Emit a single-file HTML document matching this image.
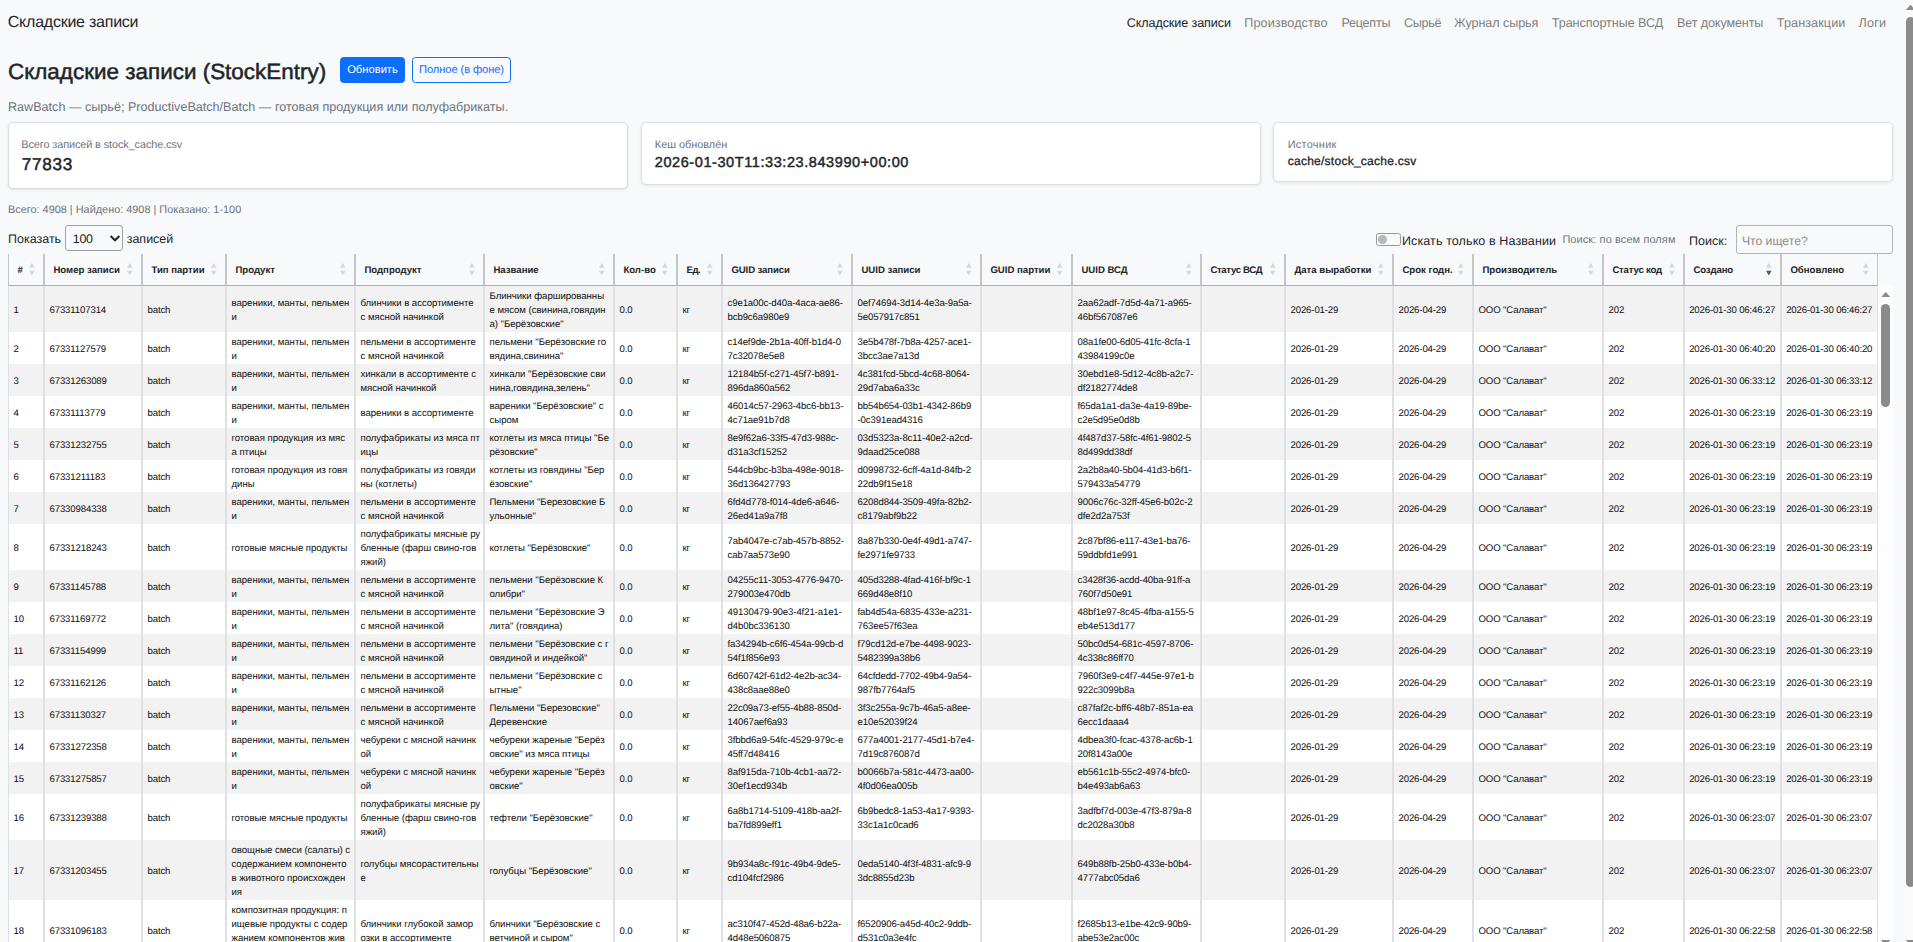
<!DOCTYPE html>
<html lang="ru"><head><meta charset="utf-8"><title>Складские записи</title>
<style>
*{box-sizing:border-box}
html,body{margin:0;padding:0}
body{width:1913px;height:942px;overflow:hidden;position:relative;background:#f8f9fa;color:#212529;font-family:"Liberation Sans",sans-serif;font-size:14px;text-rendering:geometricPrecision}
.a{position:absolute;white-space:nowrap;line-height:1;margin:0;font-weight:normal;text-decoration:none}
h1.a{font-weight:normal}
button{font-family:inherit;padding:0;margin:0;text-rendering:inherit}
.b{font-weight:bold}
.sb{-webkit-text-stroke:0.45px #212529}
.mut{color:#6c757d}
.nav{color:#7e7f80}
.nav.act{color:#212529}
.btn{position:absolute;top:57px;height:26px;border-radius:3.5px;border:1px solid #0d6efd;font-size:11.2px;line-height:25.6px;text-align:center;white-space:nowrap}
.btn.p{left:340px;width:65px;background:#0d6efd;color:#fff}
.btn.o{left:412px;width:99px;color:#0d6efd;background:transparent;letter-spacing:-0.12px}
.card{position:absolute;top:122px;background:#fff;border:1px solid #dcdee1;border-radius:5px;box-shadow:0 1px 3px rgba(0,0,0,.09)}
.sel{position:absolute;left:65px;top:225px;width:58px;height:26px;border:1px solid #a0a0a0;border-radius:3px}
.inp{position:absolute;left:1736px;top:225px;width:157px;height:28.5px;border:1px solid #b4b4b4;border-radius:3px}
.sw{position:absolute;left:1376px;top:233px;width:25px;height:12.7px;border:1px solid #999;border-radius:2.5px}
.sw i{position:absolute;left:1px;top:1px;width:8.8px;height:8.8px;border-radius:50%;background:#b8b8b8}
/* table */
.tw{position:absolute;left:8px;top:254px;width:1885px;height:688px;overflow:hidden}
table.dt{border-collapse:separate;border-spacing:0;table-layout:fixed;width:1870px;font-size:9.6px;line-height:14px}
.dt th{height:32px;background:#f8f9fa;border-left:1px solid #c3c5c8;border-right:1px solid #c3c5c8;border-bottom:1px solid #a9acb0;padding:3px 0 0 8.4px;text-align:left;font-weight:bold;font-size:9.6px;position:relative;white-space:nowrap;vertical-align:middle}
.dt td{padding:4px 4px 0 4.5px;color:#0d0e10;letter-spacing:-0.13px;border-left:1px solid #dee0e3;border-right:1px solid #dee0e3;vertical-align:middle;white-space:nowrap;overflow:hidden}
.dt th:first-child,.dt td:first-child{border-left-width:1px}
.dt td.t{padding-left:4.2px;letter-spacing:-0.16px}
.dt td.c{letter-spacing:-0.03px}
.dt td.g{letter-spacing:-0.11px}
.dt tbody tr:nth-child(odd) td{background:#f2f2f2}
.dt tbody tr:nth-child(even) td{background:#fff}
.so{position:absolute;right:8px;top:9.2px;width:5.6px;height:12.4px}
.so path{fill:#d6d7d9}
.desc .so .d{fill:#55585c}
/* scrollbars */
.isb{position:absolute;left:1878px;top:286px;width:15px;height:656px;background:#fdfdfd}
.isb .th{position:absolute;left:3.2px;top:17.8px;width:8.9px;height:103.4px;border-radius:4.5px;background:#8b8b8b}
.arr{position:absolute;width:9.6px;height:5.2px;background:#8b8b8b}
.arr.up{clip-path:polygon(50% 0,100% 100%,0 100%)}
.arr.dn{clip-path:polygon(0 0,100% 0,50% 100%)}
.psb{position:absolute;left:1903px;top:0;width:17px;height:942px;background:#fafafa}
.psb .th{position:absolute;left:3.1px;top:17px;width:9px;height:869.5px;border-radius:4.5px;background:#8b8b8b}

</style></head>
<body>
<nav>
<a class="a" id="brand" style="left:7.8px;top:14.8px;font-size:16px;letter-spacing:-0.24px">Складские записи</a>
<a class="a nav act" style="left:1126.7px;top:17.2px;font-size:12.6px;letter-spacing:-0.1px">Складские записи</a>
<a class="a nav" style="left:1244.3px;top:17.2px;font-size:12.6px;letter-spacing:0.1px">Производство</a>
<a class="a nav" style="left:1341.4px;top:17.2px;font-size:12.6px;letter-spacing:-0.24px">Рецепты</a>
<a class="a nav" style="left:1403.9px;top:17.2px;font-size:12.6px;letter-spacing:-0.28px">Сырьё</a>
<a class="a nav" style="left:1454.1px;top:17.2px;font-size:12.6px;letter-spacing:-0.08px">Журнал сырья</a>
<a class="a nav" style="left:1551.8px;top:17.2px;font-size:12.6px;letter-spacing:-0.06px">Транспортные ВСД</a>
<a class="a nav" style="left:1676.9px;top:17.2px;font-size:12.6px;letter-spacing:-0.11px">Вет документы</a>
<a class="a nav" style="left:1776.8px;top:17.2px;font-size:12.6px;letter-spacing:0.12px">Транзакции</a>
<a class="a nav" style="left:1858.6px;top:17.2px;font-size:12.6px;letter-spacing:0.2px">Логи</a>
</nav>
<h1 class="a" id="h1" style="left:8px;top:61px;font-size:22px;-webkit-text-stroke:0.5px #212529;transform-origin:0 0;transform:scaleX(1.02)">Складские записи (StockEntry)</h1>
<button type="button" class="btn p">Обновить</button>
<button type="button" class="btn o">Полное (в фоне)</button>
<span class="a mut" id="sub" style="left:8px;top:100.5px;font-size:12.6px">RawBatch — сырьё; ProductiveBatch/Batch — готовая продукция или полуфабрикаты.</span>
<div class="card" style="left:8px;width:619.5px;height:66.8px"><span class="a mut" style="left:12.3px;top:16.9px;font-size:10.9px;letter-spacing:-0.1px">Всего записей в stock_cache.csv</span><span class="a sb" style="left:12.8px;top:33.1px;font-size:17.2px;letter-spacing:0.68px">77833</span></div>
<div class="card" style="left:640.5px;width:620px;height:62.6px"><span class="a mut" style="left:13.3px;top:16.9px;font-size:10.9px">Кеш обновлён</span><span class="a sb" style="left:13.3px;top:33.1px;font-size:14.5px;letter-spacing:0.58px">2026-01-30T11:33:23.843990+00:00</span></div>
<div class="card" style="left:1273px;width:619.5px;height:59.5px"><span class="a mut" style="left:13.7px;top:16.9px;font-size:10.9px;letter-spacing:0.3px">Источник</span><span class="a sb" style="left:13.7px;top:31.5px;font-size:12px;letter-spacing:0.26px;-webkit-text-stroke-width:0.28px">cache/stock_cache.csv</span></div>
<span class="a mut" style="left:8px;top:205.2px;font-size:10.9px">Всего: 4908 | Найдено: 4908 | Показано: 1-100</span>
<span class="a" style="left:8px;top:233px;font-size:12.5px">Показать</span>
<div class="sel"><span class="a" style="left:6.8px;top:7px;font-size:12.5px;letter-spacing:-0.3px">100</span><svg style="position:absolute;left:42.5px;top:8px" width="12" height="9" viewBox="0 0 12 9"><path d="M1.6 2 L6 6.3 L10.4 2" fill="none" stroke="#212529" stroke-width="2" stroke-linecap="butt" stroke-linejoin="miter"/></svg></div>
<span class="a" style="left:126.7px;top:233px;font-size:12.5px">записей</span>
<div class="sw"><i></i></div>
<span class="a" style="left:1402px;top:235px;font-size:12.5px;letter-spacing:0.11px">Искать только в Названии</span>
<span class="a mut" style="left:1562.4px;top:234.8px;font-size:10.9px;letter-spacing:0.14px">Поиск: по всем полям</span>
<span class="a" style="left:1689px;top:235px;font-size:12.5px">Поиск:</span>
<div class="inp"><span class="a" style="left:4.9px;top:8.5px;font-size:12.2px;color:#8c8c8c">Что ищете?</span></div>
<div class="tw">
<table class="dt">
<colgroup><col style="width:36px"><col style="width:98px"><col style="width:84px"><col style="width:129px"><col style="width:129px"><col style="width:130px"><col style="width:63px"><col style="width:45px"><col style="width:130px"><col style="width:129px"><col style="width:91px"><col style="width:129px"><col style="width:84px"><col style="width:108px"><col style="width:80px"><col style="width:130px"><col style="width:81px"><col style="width:97px"><col style="width:97px"></colgroup>
<thead><tr><th><span class="hl">#</span><svg class="so" viewBox="0 0 5.6 12.4"><path class="u" d="M0 4.7L2.8 0L5.6 4.7Z"/><path class="d" d="M0 7.7L5.6 7.7L2.8 12.4Z"/></svg></th><th><span class="hl">Номер записи</span><svg class="so" viewBox="0 0 5.6 12.4"><path class="u" d="M0 4.7L2.8 0L5.6 4.7Z"/><path class="d" d="M0 7.7L5.6 7.7L2.8 12.4Z"/></svg></th><th><span class="hl">Тип партии</span><svg class="so" viewBox="0 0 5.6 12.4"><path class="u" d="M0 4.7L2.8 0L5.6 4.7Z"/><path class="d" d="M0 7.7L5.6 7.7L2.8 12.4Z"/></svg></th><th><span class="hl">Продукт</span><svg class="so" viewBox="0 0 5.6 12.4"><path class="u" d="M0 4.7L2.8 0L5.6 4.7Z"/><path class="d" d="M0 7.7L5.6 7.7L2.8 12.4Z"/></svg></th><th><span class="hl">Подпродукт</span><svg class="so" viewBox="0 0 5.6 12.4"><path class="u" d="M0 4.7L2.8 0L5.6 4.7Z"/><path class="d" d="M0 7.7L5.6 7.7L2.8 12.4Z"/></svg></th><th><span class="hl">Название</span><svg class="so" viewBox="0 0 5.6 12.4"><path class="u" d="M0 4.7L2.8 0L5.6 4.7Z"/><path class="d" d="M0 7.7L5.6 7.7L2.8 12.4Z"/></svg></th><th><span class="hl">Кол-во</span><svg class="so" viewBox="0 0 5.6 12.4"><path class="u" d="M0 4.7L2.8 0L5.6 4.7Z"/><path class="d" d="M0 7.7L5.6 7.7L2.8 12.4Z"/></svg></th><th><span class="hl" style="letter-spacing:-0.4px">Ед.</span><svg class="so" viewBox="0 0 5.6 12.4"><path class="u" d="M0 4.7L2.8 0L5.6 4.7Z"/><path class="d" d="M0 7.7L5.6 7.7L2.8 12.4Z"/></svg></th><th><span class="hl" style="letter-spacing:-0.1px">GUID записи</span><svg class="so" viewBox="0 0 5.6 12.4"><path class="u" d="M0 4.7L2.8 0L5.6 4.7Z"/><path class="d" d="M0 7.7L5.6 7.7L2.8 12.4Z"/></svg></th><th><span class="hl">UUID записи</span><svg class="so" viewBox="0 0 5.6 12.4"><path class="u" d="M0 4.7L2.8 0L5.6 4.7Z"/><path class="d" d="M0 7.7L5.6 7.7L2.8 12.4Z"/></svg></th><th><span class="hl">GUID партии</span><svg class="so" viewBox="0 0 5.6 12.4"><path class="u" d="M0 4.7L2.8 0L5.6 4.7Z"/><path class="d" d="M0 7.7L5.6 7.7L2.8 12.4Z"/></svg></th><th><span class="hl">UUID ВСД</span><svg class="so" viewBox="0 0 5.6 12.4"><path class="u" d="M0 4.7L2.8 0L5.6 4.7Z"/><path class="d" d="M0 7.7L5.6 7.7L2.8 12.4Z"/></svg></th><th><span class="hl" style="letter-spacing:-0.33px">Статус ВСД</span><svg class="so" viewBox="0 0 5.6 12.4"><path class="u" d="M0 4.7L2.8 0L5.6 4.7Z"/><path class="d" d="M0 7.7L5.6 7.7L2.8 12.4Z"/></svg></th><th><span class="hl">Дата выработки</span><svg class="so" viewBox="0 0 5.6 12.4"><path class="u" d="M0 4.7L2.8 0L5.6 4.7Z"/><path class="d" d="M0 7.7L5.6 7.7L2.8 12.4Z"/></svg></th><th><span class="hl">Срок годн.</span><svg class="so" viewBox="0 0 5.6 12.4"><path class="u" d="M0 4.7L2.8 0L5.6 4.7Z"/><path class="d" d="M0 7.7L5.6 7.7L2.8 12.4Z"/></svg></th><th><span class="hl">Производитель</span><svg class="so" viewBox="0 0 5.6 12.4"><path class="u" d="M0 4.7L2.8 0L5.6 4.7Z"/><path class="d" d="M0 7.7L5.6 7.7L2.8 12.4Z"/></svg></th><th><span class="hl" style="letter-spacing:-0.2px">Статус код</span><svg class="so" viewBox="0 0 5.6 12.4"><path class="u" d="M0 4.7L2.8 0L5.6 4.7Z"/><path class="d" d="M0 7.7L5.6 7.7L2.8 12.4Z"/></svg></th><th class="desc"><span class="hl" style="letter-spacing:-0.12px">Создано</span><svg class="so" viewBox="0 0 5.6 12.4"><path class="u" d="M0 4.7L2.8 0L5.6 4.7Z"/><path class="d" d="M0 7.7L5.6 7.7L2.8 12.4Z"/></svg></th><th><span class="hl">Обновлено</span><svg class="so" viewBox="0 0 5.6 12.4"><path class="u" d="M0 4.7L2.8 0L5.6 4.7Z"/><path class="d" d="M0 7.7L5.6 7.7L2.8 12.4Z"/></svg></th></tr></thead>
<tbody>
<tr><td>1</td><td>67331107314</td><td>batch</td><td class="c">вареники, манты, пельмен<br>и</td><td class="c">блинчики в ассортименте<br>с мясной начинкой</td><td class="c">Блинчики фаршированны<br>е мясом (свинина,говядин<br>а) &quot;Берёзовские&quot;</td><td>0.0</td><td>кг</td><td class="g">c9e1a00c-d40a-4aca-ae86-<br>bcb9c6a980e9</td><td class="g">0ef74694-3d14-4e3a-9a5a-<br>5e057917c851</td><td></td><td class="g">2aa62adf-7d5d-4a71-a965-<br>46bf567087e6</td><td></td><td>2026-01-29</td><td>2026-04-29</td><td>ООО &quot;Салават&quot;</td><td>202</td><td class="t">2026-01-30 06:46:27</td><td class="t">2026-01-30 06:46:27</td></tr>
<tr><td>2</td><td>67331127579</td><td>batch</td><td class="c">вареники, манты, пельмен<br>и</td><td class="c">пельмени в ассортименте<br>с мясной начинкой</td><td class="c">пельмени &quot;Берёзовские го<br>вядина,свинина&quot;</td><td>0.0</td><td>кг</td><td class="g">c14ef9de-2b1a-40ff-b1d4-0<br>7c32078e5e8</td><td class="g">3e5b478f-7b8a-4257-ace1-<br>3bcc3ae7a13d</td><td></td><td class="g">08a1fe00-6d05-41fc-8cfa-1<br>43984199c0e</td><td></td><td>2026-01-29</td><td>2026-04-29</td><td>ООО &quot;Салават&quot;</td><td>202</td><td class="t">2026-01-30 06:40:20</td><td class="t">2026-01-30 06:40:20</td></tr>
<tr><td>3</td><td>67331263089</td><td>batch</td><td class="c">вареники, манты, пельмен<br>и</td><td class="c">хинкали в ассортименте с<br>мясной начинкой</td><td class="c">хинкали &quot;Берёзовские сви<br>нина,говядина,зелень&quot;</td><td>0.0</td><td>кг</td><td class="g">12184b5f-c271-45f7-b891-<br>896da860a562</td><td class="g">4c381fcd-5bcd-4c68-8064-<br>29d7aba6a33c</td><td></td><td class="g">30ebd1e8-5d12-4c8b-a2c7-<br>df2182774de8</td><td></td><td>2026-01-29</td><td>2026-04-29</td><td>ООО &quot;Салават&quot;</td><td>202</td><td class="t">2026-01-30 06:33:12</td><td class="t">2026-01-30 06:33:12</td></tr>
<tr><td>4</td><td>67331113779</td><td>batch</td><td class="c">вареники, манты, пельмен<br>и</td><td class="c">вареники в ассортименте</td><td class="c">вареники &quot;Берёзовские&quot; с<br>сыром</td><td>0.0</td><td>кг</td><td class="g">46014c57-2963-4bc6-bb13-<br>4c71ae91b7d8</td><td class="g">bb54b654-03b1-4342-86b9<br>-0c391ead4316</td><td></td><td class="g">f65da1a1-da3e-4a19-89be-<br>c2e5d95e0d8b</td><td></td><td>2026-01-29</td><td>2026-04-29</td><td>ООО &quot;Салават&quot;</td><td>202</td><td class="t">2026-01-30 06:23:19</td><td class="t">2026-01-30 06:23:19</td></tr>
<tr><td>5</td><td>67331232755</td><td>batch</td><td class="c">готовая продукция из мяс<br>а птицы</td><td class="c">полуфабрикаты из мяса пт<br>ицы</td><td class="c">котлеты из мяса птицы &quot;Бе<br>рёзовские&quot;</td><td>0.0</td><td>кг</td><td class="g">8e9f62a6-33f5-47d3-988c-<br>d31a3cf15252</td><td class="g">03d5323a-8c11-40e2-a2cd-<br>9daad25ce088</td><td></td><td class="g">4f487d37-58fc-4f61-9802-5<br>8d499dd38df</td><td></td><td>2026-01-29</td><td>2026-04-29</td><td>ООО &quot;Салават&quot;</td><td>202</td><td class="t">2026-01-30 06:23:19</td><td class="t">2026-01-30 06:23:19</td></tr>
<tr><td>6</td><td>67331211183</td><td>batch</td><td class="c">готовая продукция из говя<br>дины</td><td class="c">полуфабрикаты из говяди<br>ны (котлеты)</td><td class="c">котлеты из говядины &quot;Бер<br>ёзовские&quot;</td><td>0.0</td><td>кг</td><td class="g">544cb9bc-b3ba-498e-9018-<br>36d136427793</td><td class="g">d0998732-6cff-4a1d-84fb-2<br>22db9f15e18</td><td></td><td class="g">2a2b8a40-5b04-41d3-b6f1-<br>579433a54779</td><td></td><td>2026-01-29</td><td>2026-04-29</td><td>ООО &quot;Салават&quot;</td><td>202</td><td class="t">2026-01-30 06:23:19</td><td class="t">2026-01-30 06:23:19</td></tr>
<tr><td>7</td><td>67330984338</td><td>batch</td><td class="c">вареники, манты, пельмен<br>и</td><td class="c">пельмени в ассортименте<br>с мясной начинкой</td><td class="c">Пельмени &quot;Березовские Б<br>ульонные&quot;</td><td>0.0</td><td>кг</td><td class="g">6fd4d778-f014-4de6-a646-<br>26ed41a9a7f8</td><td class="g">6208d844-3509-49fa-82b2-<br>c8179abf9b22</td><td></td><td class="g">9006c76c-32ff-45e6-b02c-2<br>dfe2d2a753f</td><td></td><td>2026-01-29</td><td>2026-04-29</td><td>ООО &quot;Салават&quot;</td><td>202</td><td class="t">2026-01-30 06:23:19</td><td class="t">2026-01-30 06:23:19</td></tr>
<tr><td>8</td><td>67331218243</td><td>batch</td><td class="c">готовые мясные продукты</td><td class="c">полуфабрикаты мясные ру<br>бленные (фарш свино-гов<br>яжий)</td><td class="c">котлеты &quot;Берёзовские&quot;</td><td>0.0</td><td>кг</td><td class="g">7ab4047e-c7ab-457b-8852-<br>cab7aa573e90</td><td class="g">8a87b330-0e4f-49d1-a747-<br>fe2971fe9733</td><td></td><td class="g">2c87bf86-e117-43e1-ba76-<br>59ddbfd1e991</td><td></td><td>2026-01-29</td><td>2026-04-29</td><td>ООО &quot;Салават&quot;</td><td>202</td><td class="t">2026-01-30 06:23:19</td><td class="t">2026-01-30 06:23:19</td></tr>
<tr><td>9</td><td>67331145788</td><td>batch</td><td class="c">вареники, манты, пельмен<br>и</td><td class="c">пельмени в ассортименте<br>с мясной начинкой</td><td class="c">пельмени &quot;Берёзовские К<br>олибри&quot;</td><td>0.0</td><td>кг</td><td class="g">04255c11-3053-4776-9470-<br>279003e470db</td><td class="g">405d3288-4fad-416f-bf9c-1<br>669d48e8f10</td><td></td><td class="g">c3428f36-acdd-40ba-91ff-a<br>760f7d50e91</td><td></td><td>2026-01-29</td><td>2026-04-29</td><td>ООО &quot;Салават&quot;</td><td>202</td><td class="t">2026-01-30 06:23:19</td><td class="t">2026-01-30 06:23:19</td></tr>
<tr><td>10</td><td>67331169772</td><td>batch</td><td class="c">вареники, манты, пельмен<br>и</td><td class="c">пельмени в ассортименте<br>с мясной начинкой</td><td class="c">пельмени &quot;Берёзовские Э<br>лита&quot; (говядина)</td><td>0.0</td><td>кг</td><td class="g">49130479-90e3-4f21-a1e1-<br>d4b0bc336130</td><td class="g">fab4d54a-6835-433e-a231-<br>763ee57f63ea</td><td></td><td class="g">48bf1e97-8c45-4fba-a155-5<br>eb4e513d177</td><td></td><td>2026-01-29</td><td>2026-04-29</td><td>ООО &quot;Салават&quot;</td><td>202</td><td class="t">2026-01-30 06:23:19</td><td class="t">2026-01-30 06:23:19</td></tr>
<tr><td>11</td><td>67331154999</td><td>batch</td><td class="c">вареники, манты, пельмен<br>и</td><td class="c">пельмени в ассортименте<br>с мясной начинкой</td><td class="c">пельмени &quot;Берёзовские с г<br>овядиной и индейкой&quot;</td><td>0.0</td><td>кг</td><td class="g">fa34294b-c6f6-454a-99cb-d<br>54f1f856e93</td><td class="g">f79cd12d-e7be-4498-9023-<br>5482399a38b6</td><td></td><td class="g">50bc0d54-681c-4597-8706-<br>4c338c86ff70</td><td></td><td>2026-01-29</td><td>2026-04-29</td><td>ООО &quot;Салават&quot;</td><td>202</td><td class="t">2026-01-30 06:23:19</td><td class="t">2026-01-30 06:23:19</td></tr>
<tr><td>12</td><td>67331162126</td><td>batch</td><td class="c">вареники, манты, пельмен<br>и</td><td class="c">пельмени в ассортименте<br>с мясной начинкой</td><td class="c">пельмени &quot;Берёзовские с<br>ытные&quot;</td><td>0.0</td><td>кг</td><td class="g">6d60742f-61d2-4e2b-ac34-<br>438c8aae88e0</td><td class="g">64cfdedd-7702-49b4-9a54-<br>987fb7764af5</td><td></td><td class="g">7960f3e9-c4f7-445e-97e1-b<br>922c3099b8a</td><td></td><td>2026-01-29</td><td>2026-04-29</td><td>ООО &quot;Салават&quot;</td><td>202</td><td class="t">2026-01-30 06:23:19</td><td class="t">2026-01-30 06:23:19</td></tr>
<tr><td>13</td><td>67331130327</td><td>batch</td><td class="c">вареники, манты, пельмен<br>и</td><td class="c">пельмени в ассортименте<br>с мясной начинкой</td><td class="c">Пельмени &quot;Березовские&quot;<br>Деревенские</td><td>0.0</td><td>кг</td><td class="g">22c09a73-ef55-4b88-850d-<br>14067aef6a93</td><td class="g">3f3c255a-9c7b-46a5-a8ee-<br>e10e52039f24</td><td></td><td class="g">c87faf2c-bff6-48b7-851a-ea<br>6ecc1daaa4</td><td></td><td>2026-01-29</td><td>2026-04-29</td><td>ООО &quot;Салават&quot;</td><td>202</td><td class="t">2026-01-30 06:23:19</td><td class="t">2026-01-30 06:23:19</td></tr>
<tr><td>14</td><td>67331272358</td><td>batch</td><td class="c">вареники, манты, пельмен<br>и</td><td class="c">чебуреки с мясной начинк<br>ой</td><td class="c">чебуреки жареные &quot;Берёз<br>овские&quot; из мяса птицы</td><td>0.0</td><td>кг</td><td class="g">3fbbd6a9-54fc-4529-979c-e<br>45ff7d48416</td><td class="g">677a4001-2177-45d1-b7e4-<br>7d19c876087d</td><td></td><td class="g">4dbea3f0-fcac-4378-ac6b-1<br>20f8143a00e</td><td></td><td>2026-01-29</td><td>2026-04-29</td><td>ООО &quot;Салават&quot;</td><td>202</td><td class="t">2026-01-30 06:23:19</td><td class="t">2026-01-30 06:23:19</td></tr>
<tr><td>15</td><td>67331275857</td><td>batch</td><td class="c">вареники, манты, пельмен<br>и</td><td class="c">чебуреки с мясной начинк<br>ой</td><td class="c">чебуреки жареные &quot;Берёз<br>овские&quot;</td><td>0.0</td><td>кг</td><td class="g">8af915da-710b-4cb1-aa72-<br>30ef1ecd934b</td><td class="g">b0066b7a-581c-4473-aa00-<br>4f0d06ea005b</td><td></td><td class="g">eb561c1b-55c2-4974-bfc0-<br>b4e493ab6a63</td><td></td><td>2026-01-29</td><td>2026-04-29</td><td>ООО &quot;Салават&quot;</td><td>202</td><td class="t">2026-01-30 06:23:19</td><td class="t">2026-01-30 06:23:19</td></tr>
<tr><td>16</td><td>67331239388</td><td>batch</td><td class="c">готовые мясные продукты</td><td class="c">полуфабрикаты мясные ру<br>бленные (фарш свино-гов<br>яжий)</td><td class="c">тефтели &quot;Берёзовские&quot;</td><td>0.0</td><td>кг</td><td class="g">6a8b1714-5109-418b-aa2f-<br>ba7fd899eff1</td><td class="g">6b9bedc8-1a53-4a17-9393-<br>33c1a1c0cad6</td><td></td><td class="g">3adfbf7d-003e-47f3-879a-8<br>dc2028a30b8</td><td></td><td>2026-01-29</td><td>2026-04-29</td><td>ООО &quot;Салават&quot;</td><td>202</td><td class="t">2026-01-30 06:23:07</td><td class="t">2026-01-30 06:23:07</td></tr>
<tr><td>17</td><td>67331203455</td><td>batch</td><td class="c">овощные смеси (салаты) с<br>содержанием компоненто<br>в животного происхожден<br>ия</td><td class="c">голубцы мясорастительны<br>е</td><td class="c">голубцы &quot;Берёзовские&quot;</td><td>0.0</td><td>кг</td><td class="g">9b934a8c-f91c-49b4-9de5-<br>cd104fcf2986</td><td class="g">0eda5140-4f3f-4831-afc9-9<br>3dc8855d23b</td><td></td><td class="g">649b88fb-25b0-433e-b0b4-<br>4777abc05da6</td><td></td><td>2026-01-29</td><td>2026-04-29</td><td>ООО &quot;Салават&quot;</td><td>202</td><td class="t">2026-01-30 06:23:07</td><td class="t">2026-01-30 06:23:07</td></tr>
<tr><td>18</td><td>67331096183</td><td>batch</td><td class="c">композитная продукция: п<br>ищевые продукты с содер<br>жанием компонентов жив<br>отного происхождения</td><td class="c">блинчики глубокой замор<br>озки в ассортименте</td><td class="c">блинчики &quot;Берёзовские с<br>ветчиной и сыром&quot;</td><td>0.0</td><td>кг</td><td class="g">ac310f47-452d-48a6-b22a-<br>4d48e5060875</td><td class="g">f6520906-a45d-40c2-9ddb-<br>d531c0a3e4fc</td><td></td><td class="g">f2685b13-e1be-42c9-90b9-<br>abe53e2ac00c</td><td></td><td>2026-01-29</td><td>2026-04-29</td><td>ООО &quot;Салават&quot;</td><td>202</td><td class="t">2026-01-30 06:22:58</td><td class="t">2026-01-30 06:22:58</td></tr>
</tbody></table>
</div>
<div class="isb"><i class="arr up" style="left:2.9px;top:6px"></i><div class="th"></div><i class="arr dn" style="left:2.9px;top:654px"></i></div>
<div class="psb"><i class="arr up" style="left:2.8px;top:4.8px"></i><div class="th"></div><i class="arr dn" style="left:2.8px;top:940px"></i></div>
</body></html>
